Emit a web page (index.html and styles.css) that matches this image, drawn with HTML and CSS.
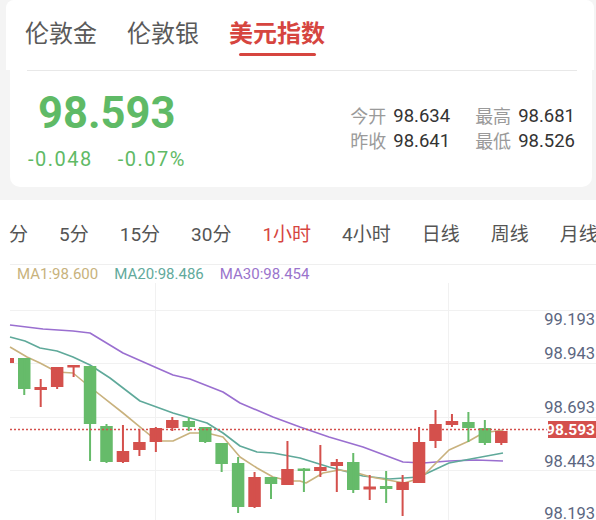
FILE: index.html
```html
<!DOCTYPE html>
<html lang="zh">
<head>
<meta charset="utf-8">
<title>美元指数</title>
<link rel="stylesheet" href="styles.css">
</head>
<body>
<header class="tabs">
  <div class="tab">伦敦金</div>
  <div class="tab">伦敦银</div>
  <div class="tab active">美元指数<span class="bar"></span></div>
</header>
<section class="quote">
  <div class="sep"></div>
  <div class="quote-body">
    <div class="main">
      <div class="price">98.593</div>
      <div class="change"><span>-0.048</span><span>-0.07%</span></div>
    </div>
    <div class="stats">
      <span class="lab">今开</span><span class="val">98.634</span>
      <span class="lab">最高</span><span class="val">98.681</span>
      <span class="lab">昨收</span><span class="val">98.641</span>
      <span class="lab">最低</span><span class="val">98.526</span>
    </div>
  </div>
</section>
<section class="panel">
  <nav class="periods">
    <span>分</span><span>5分</span><span>15分</span><span>30分</span><span class="on">1小时</span><span>4小时</span><span>日线</span><span>周线</span><span>月线</span>
  </nav>
  <div class="legend">
    <span class="ma1">MA1:98.600</span><span class="ma20">MA20:98.486</span><span class="ma30">MA30:98.454</span>
  </div>
  <svg class="chart" width="596" height="237" viewBox="0 283 596 237">
    <g class="grid">
      <line x1="10" y1="310.5" x2="596" y2="310.5"/>
      <line x1="10" y1="363.5" x2="596" y2="363.5"/>
      <line x1="10" y1="417.5" x2="596" y2="417.5"/>
      <line x1="10" y1="470.5" x2="596" y2="470.5"/>
      <line x1="155.5" y1="283" x2="155.5" y2="520"/>
      <line x1="448.5" y1="283" x2="448.5" y2="520"/>
    </g>
    <polyline class="l30" points="10,325 43,329 73,331 90,333 123,353 157,368 173,375 190,379 223,392 240,403 273,417 300,427 329,437 363,447 403,462 423,463 449,461 476,460 503,461"/>
    <polyline class="l20" points="10,337 25,341 40,348 57,351 73,357 90,365 110,378 140,401 173,413 190,418 207,423 223,433 240,446 257,452 273,453 300,458 329,467 363,476 389,479 419,477 449,463 476,458 503,453"/>
    <polyline class="l1" points="10,347 27,357 40,363 57,372 73,373 90,387 123,413 157,441 173,441 190,433 207,433 223,437 240,457 257,468 273,477 290,481 300,481 306,483 323,473 339,470 354,472 371,477 388,480 404,483 421,478 436,463 449,450 469,441 483,433 503,430"/>
    <g class="up">
      <rect x="18" y="358" width="12.5" height="31"/><rect x="23.25" y="358" width="2" height="37"/>
      <rect x="83.8" y="366" width="12.5" height="58"/><rect x="89.05" y="366" width="2" height="95"/>
      <rect x="100.25" y="426" width="12.5" height="36"/><rect x="105.5" y="424" width="2" height="39"/>
      <rect x="182.5" y="421" width="12.5" height="6"/><rect x="187.75" y="417" width="2" height="14"/>
      <rect x="198.95" y="427" width="12.5" height="15"/><rect x="204.2" y="427" width="2" height="16"/>
      <rect x="215.4" y="443" width="12.5" height="21"/><rect x="220.65" y="443" width="2" height="29"/>
      <rect x="231.85" y="463" width="12.5" height="44"/><rect x="237.1" y="457" width="2" height="56"/>
      <rect x="264.75" y="477" width="12.5" height="7"/><rect x="270" y="477" width="2" height="22"/>
      <rect x="297.65" y="468.5" width="12.5" height="2.5"/><rect x="302.9" y="468" width="2" height="24"/>
      <rect x="347" y="462" width="12.5" height="28"/><rect x="352.25" y="453" width="2" height="40"/>
      <rect x="379.9" y="486" width="12.5" height="3"/><rect x="385.15" y="471" width="2" height="32"/>
      <rect x="462.15" y="422" width="12.5" height="6"/><rect x="467.4" y="412" width="2" height="30"/>
      <rect x="478.6" y="428" width="12.5" height="15"/><rect x="483.85" y="420" width="2" height="25"/>
    </g>
    <g class="down">
      <rect x="10" y="358" width="4" height="5"/>
      <rect x="34.45" y="387" width="12.5" height="3"/><rect x="39.7" y="379" width="2" height="28"/>
      <rect x="50.9" y="367" width="12.5" height="20"/><rect x="56.15" y="367" width="2" height="22"/>
      <rect x="67.35" y="365" width="12.5" height="2.5"/><rect x="72.6" y="365" width="2" height="12"/>
      <rect x="116.7" y="451" width="12.5" height="11"/><rect x="121.95" y="425" width="2" height="38"/>
      <rect x="133.15" y="442" width="12.5" height="8"/><rect x="138.4" y="429" width="2" height="27"/>
      <rect x="149.6" y="428" width="12.5" height="14"/><rect x="154.85" y="427" width="2" height="25"/>
      <rect x="166.05" y="420" width="12.5" height="8"/><rect x="171.3" y="417" width="2" height="14"/>
      <rect x="248.3" y="477" width="12.5" height="30"/><rect x="253.55" y="472" width="2" height="36"/>
      <rect x="281.2" y="469" width="12.5" height="16"/><rect x="286.45" y="441" width="2" height="44"/>
      <rect x="314.1" y="467" width="12.5" height="4"/><rect x="319.35" y="445" width="2" height="32"/>
      <rect x="330.55" y="462" width="12.5" height="4"/><rect x="335.8" y="459" width="2" height="33"/>
      <rect x="363.45" y="486.5" width="12.5" height="3"/><rect x="368.7" y="475" width="2" height="25"/>
      <rect x="396.35" y="482" width="12.5" height="8"/><rect x="401.6" y="475" width="2" height="41"/>
      <rect x="412.8" y="442" width="12.5" height="41"/><rect x="418.05" y="427" width="2" height="56"/>
      <rect x="429.25" y="424" width="12.5" height="17"/><rect x="434.5" y="410" width="2" height="38"/>
      <rect x="445.7" y="421" width="12.5" height="4"/><rect x="450.95" y="414" width="2" height="13"/>
      <rect x="495.05" y="431" width="12.5" height="12"/><rect x="500.3" y="431" width="2" height="14"/>
    </g>
    <line class="last" x1="10" y1="429.5" x2="548" y2="429.5"/>
    <g class="axis">
      <text x="595" y="325">99.193</text>
      <text x="595" y="359">98.943</text>
      <text x="595" y="413">98.693</text>
      <text x="595" y="467">98.443</text>
      <text x="595" y="519">98.193</text>
    </g>
    <rect class="tag" x="548" y="421" width="48" height="17"/>
    <text class="tag-text" x="595" y="435">98.593</text>
  </svg>
</section>
</body>
</html>
```

FILE: styles.css
```css
* { box-sizing: border-box; }
html, body { margin: 0; padding: 0; }
body {
  width: 596px;
  height: 520px;
  overflow: hidden;
  background: #f4f4f4;
  font-family: Roboto, "Noto Sans CJK SC", sans-serif;
}

.tabs {
  margin: 0 2px 0 6px;
  height: 70px;
  background: #fff;
  border-radius: 8px 8px 0 0;
  display: flex;
  align-items: flex-start;
  gap: 30px;
  padding: 22px 0 0 19px;
}
.tab {
  display: flex;
  flex-direction: column;
  align-items: center;
  font-size: 24px;
  line-height: 24px;
  color: #5a5a5a;
}
.tab.active {
  color: #d6453f;
  font-weight: 700;
}
.tab .bar {
  display: block;
  width: 77px;
  height: 3px;
  margin-top: 7px;
  border-radius: 2px;
  background: #d6453f;
}

.quote {
  margin: 0 4px 0 10px;
  height: 117px;
  background: #fff;
  border-radius: 0 0 10px 10px;
}
.sep {
  height: 1px;
  margin: 0 15px 0 17px;
  background: #e8e8e8;
}
.quote-body {
  display: flex;
  justify-content: space-between;
  padding: 0 17px 0 18px;
}
.main {
  padding-top: 21px;
  color: #5fba66;
}
.price {
  margin-left: 10px;
  font-size: 43.5px;
  line-height: 43px;
  font-weight: 700;
}
.change {
  display: flex;
  gap: 25px;
  margin-top: 14px;
  font-size: 20px;
  line-height: 20px;
  letter-spacing: 1.5px;
}
.stats {
  display: grid;
  grid-template-columns: auto auto auto auto;
  align-content: start;
  padding-top: 33px;
  line-height: 25px;
}
.lab {
  font-size: 18px;
  color: #9a9a9a;
  margin-right: 7px;
}
.val {
  font-size: 18.5px;
  color: #333;
  letter-spacing: 0;
  margin-right: 25px;
}
.val:nth-child(4n) { margin-right: 0; }

.panel {
  margin-top: 13px;
  background: #fff;
  height: 320px;
}
.periods {
  height: 64px;
  display: flex;
  align-items: center;
  gap: 31px;
  padding-left: 9px;
  white-space: nowrap;
  overflow: hidden;
  font-size: 19px;
  color: #555;
}
.periods .on { color: #d6453f; }

.legend {
  margin-left: 10px;
  border-top: 1px solid #efefef;
  height: 19px;
  padding-left: 7px;
  display: flex;
  gap: 16px;
  font-size: 15px;
  line-height: 18px;
}
.ma1 { color: #c8b27c; }
.ma20 { color: #62aa9c; }
.ma30 { color: #9a74cc; }

.chart { display: block; }
.grid line { stroke: #f1f1f1; stroke-width: 1; }
.chart polyline { fill: none; stroke-width: 1.6; stroke-linejoin: round; }
.l30 { stroke: #9a6fd0; }
.l20 { stroke: #5fa99a; }
.l1 { stroke: #c9b27e; }
.up { fill: #66bb6a; }
.down { fill: #d4504c; }
.last { stroke: #d4504c; stroke-width: 1.5; stroke-dasharray: 2 2; }
.axis text {
  font-family: Roboto, sans-serif;
  font-size: 16.5px;
  fill: #5b6680;
  text-anchor: end;
}
.tag { fill: #d4504c; }
.tag-text {
  font-family: Roboto, sans-serif;
  font-size: 15.5px;
  font-weight: 700;
  fill: #fff;
  text-anchor: end;
}
```
